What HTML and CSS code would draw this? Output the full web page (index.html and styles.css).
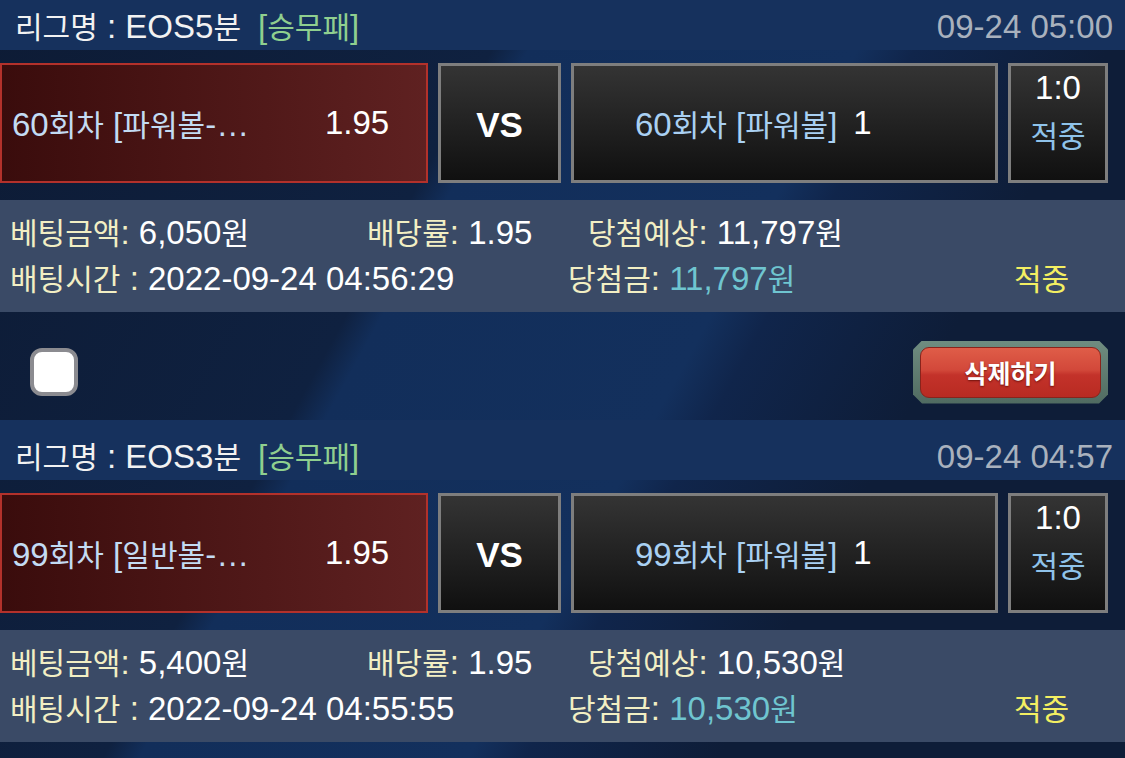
FILE: index.html
```html
<!DOCTYPE html>
<html lang="ko">
<head>
<meta charset="utf-8">
<title>배팅내역</title>
<link rel="stylesheet" href="styles.css">
</head>
<body>
<div class="page">
  <section class="bet">
    <div class="bet-head">
      <div class="league"><span class="k">리그명</span> : EOS5<span class="k">분</span><span class="type">[<span class="k">승무패</span>]</span></div>
      <div class="time">09-24 05:00</div>
    </div>
    <div class="match">
      <div class="pick">
        <span class="pick-name">60<span class="k">회차</span> [<span class="k">파워볼</span>-…</span>
        <span class="pick-odds">1.95</span>
      </div>
      <div class="vs">VS</div>
      <div class="team"><span class="team-name">60<span class="k">회차</span> [<span class="k">파워볼</span>]</span><span class="team-score">1</span></div>
      <div class="result"><span class="score">1:0</span><span class="k hit">적중</span></div>
    </div>
    <div class="info">
      <div class="info-row">
        <div class="cell w1"><span class="label"><span class="k">베팅금액</span>:</span> 6,050<span class="k">원</span></div>
        <div class="cell w2"><span class="label"><span class="k">배당률</span>:</span> 1.95</div>
        <div class="cell"><span class="label"><span class="k">당첨예상</span>:</span> 11,797<span class="k">원</span></div>
      </div>
      <div class="info-row">
        <div class="cell w3"><span class="label"><span class="k">배팅시간</span> :</span> 2022-09-24 04:56:29</div>
        <div class="cell w4"><span class="label"><span class="k">당첨금</span>:</span> <span class="won">11,797<span class="k">원</span></span></div>
        <div class="cell"><span class="k win">적중</span></div>
      </div>
    </div>
    <div class="actions">
      <div class="check"></div>
      <div class="del"><div class="del-inner">삭제하기</div></div>
    </div>
  </section>

  <section class="bet">
    <div class="bet-head">
      <div class="league"><span class="k">리그명</span> : EOS3<span class="k">분</span><span class="type">[<span class="k">승무패</span>]</span></div>
      <div class="time">09-24 04:57</div>
    </div>
    <div class="match">
      <div class="pick">
        <span class="pick-name">99<span class="k">회차</span> [<span class="k">일반볼</span>-…</span>
        <span class="pick-odds">1.95</span>
      </div>
      <div class="vs">VS</div>
      <div class="team"><span class="team-name">99<span class="k">회차</span> [<span class="k">파워볼</span>]</span><span class="team-score">1</span></div>
      <div class="result"><span class="score">1:0</span><span class="k hit">적중</span></div>
    </div>
    <div class="info">
      <div class="info-row">
        <div class="cell w1"><span class="label"><span class="k">베팅금액</span>:</span> 5,400<span class="k">원</span></div>
        <div class="cell w2"><span class="label"><span class="k">배당률</span>:</span> 1.95</div>
        <div class="cell"><span class="label"><span class="k">당첨예상</span>:</span> 10,530<span class="k">원</span></div>
      </div>
      <div class="info-row">
        <div class="cell w3"><span class="label"><span class="k">배팅시간</span> :</span> 2022-09-24 04:55:55</div>
        <div class="cell w4"><span class="label"><span class="k">당첨금</span>:</span> <span class="won">10,530<span class="k">원</span></span></div>
        <div class="cell"><span class="k win">적중</span></div>
      </div>
    </div>
  </section>
</div>
</body>
</html>
```

FILE: styles.css
```css
* { box-sizing: border-box; }
html, body { margin: 0; padding: 0; }
body {
  width: 1125px;
  height: 758px;
  overflow: hidden;
  background: #0e1d38;
  font-family: "Liberation Sans", "Noto Sans CJK KR", sans-serif;
  font-size: 33px;
  color: #ffffff;
}
.k { font-size: 0.91em; }

.page {
  margin-top: -10px;
  background: linear-gradient(118.8deg,
    #0d1b35 0px, #0f2140 460px, #122e5a 492px,
    #13305d 780px, #10254b 830px, #0e1d38 1000px, #0e1d38 1400px);
}

.bet { height: 430px; }

.bet-head {
  height: 60px;
  padding: 13px 12px 0 15px;
  background: #16315d;
  display: flex;
  justify-content: space-between;
  line-height: 47px;
  white-space: nowrap;
}
.league { color: #f2f2f2; }
.type { color: #8fcf8f; margin-left: 17px; }
.time { color: #a9b1bd; }

.match {
  display: flex;
  gap: 10px;
  margin-top: 13px;
  height: 120px;
  white-space: nowrap;
}
.pick {
  width: 428px;
  border: 2px solid #b3312b;
  background: linear-gradient(90deg, #3a0c0c, #5f2121);
  display: flex;
  align-items: center;
  padding-left: 10px;
}
.pick-name { width: 313px; color: #c3dbf3; }
.pick-odds { color: #ffffff; }

.vs {
  width: 123px;
  border: 3px solid #7e7e7e;
  background: linear-gradient(#343434, #101010);
  display: flex;
  align-items: center;
  justify-content: center;
  font-weight: bold;
  font-size: 35px;
  padding-top: 4px;
}
.team {
  width: 427px;
  border: 3px solid #7e7e7e;
  background: linear-gradient(#343434, #101010);
  display: flex;
  align-items: center;
  padding-left: 61px;
}
.team-name { color: #a9d0f2; }
.team-score { margin-left: 16px; color: #ffffff; }

.result {
  width: 100px;
  border: 3px solid #7e7e7e;
  background: linear-gradient(#343434, #101010);
  display: flex;
  flex-direction: column;
  align-items: center;
}
.score { line-height: 44px; }
.hit { line-height: 44px; margin-top: 5px; color: #8fc3ea; }

.info {
  margin-top: 17px;
  height: 112px;
  background: #3a4a66;
  padding: 10px 0 0 10px;
}
.info-row {
  display: flex;
  height: 46px;
  line-height: 46px;
  white-space: nowrap;
}
.w1 { width: 357px; }
.w2 { width: 221px; }
.w3 { width: 558px; }
.w4 { width: 446px; }
.label { color: #f2efc4; }
.won { color: #6fc5d0; }
.win { color: #f3ef62; }

.actions {
  height: 108px;
  display: flex;
  justify-content: space-between;
  align-items: center;
  padding: 12px 17px 0 30px;
}
.check {
  width: 48px;
  height: 48px;
  background: #ffffff;
  border: 4px solid #8b8b90;
  border-radius: 12px;
}
.del {
  width: 195px;
  height: 63px;
  padding: 6px 7px;
  background: linear-gradient(#6f8c80, #506b61);
  clip-path: polygon(9px 0, calc(100% - 9px) 0, 100% 9px, 100% calc(100% - 9px), calc(100% - 9px) 100%, 9px 100%, 0 calc(100% - 9px), 0 9px);
}
.del-inner {
  height: 100%;
  border-radius: 9px;
  border: 1px solid #8a231b;
  background: linear-gradient(#df5d48 0%, #d2483a 45%, #c3322a 55%, #b82b22 100%);
  display: flex;
  align-items: center;
  justify-content: center;
  color: #ffffff;
  font-family: "Noto Sans CJK KR", sans-serif;
  font-weight: bold;
  font-size: 25px;
  text-shadow: 0 1px 2px rgba(90, 10, 5, 0.8);
}
```
